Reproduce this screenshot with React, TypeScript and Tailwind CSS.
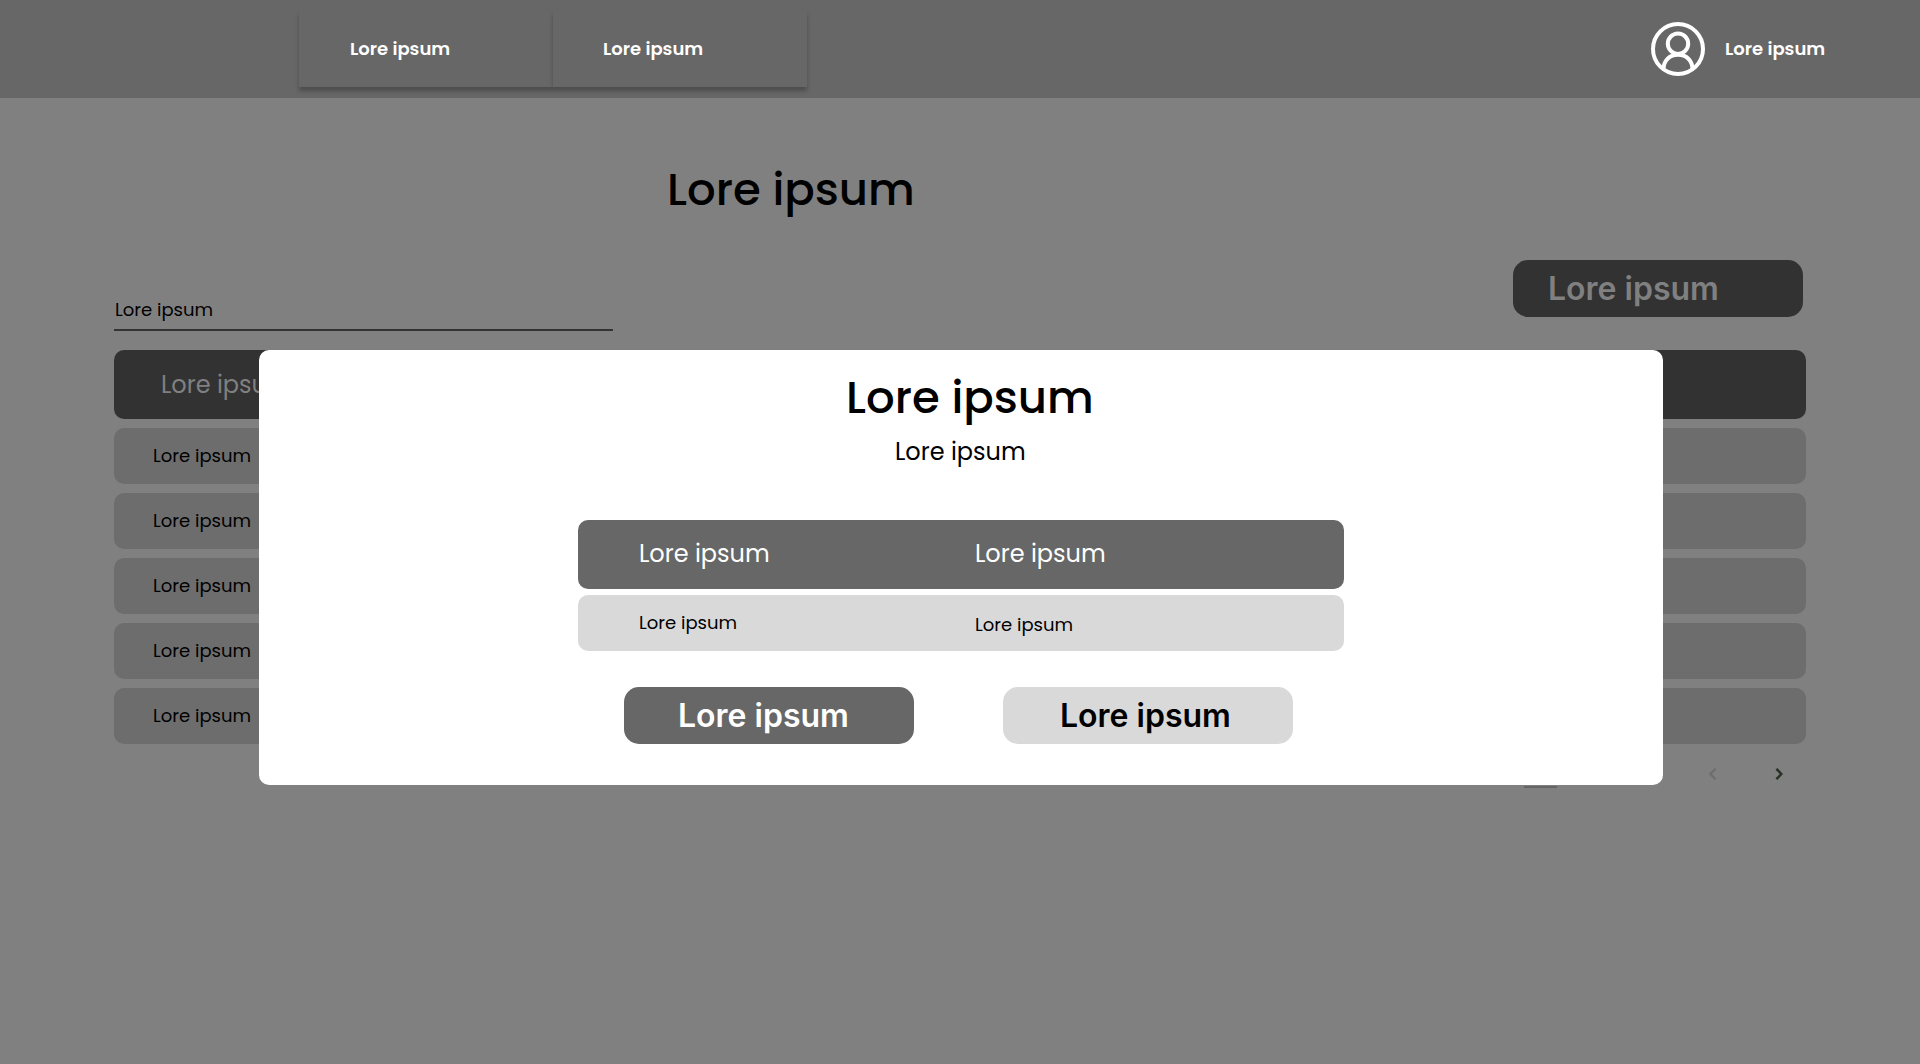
import type { ReactNode } from "react";

const rows = ["Lore ipsum", "Lore ipsum", "Lore ipsum", "Lore ipsum", "Lore ipsum"];

function NavTab({ children, className }: { children: ReactNode; className: string }) {
  return (
    <a
      className={`flex h-full w-[254px] items-center bg-[#676767] pb-px text-lg/[19px] font-semibold text-white shadow-[0_4px_4px_rgba(0,0,0,0.25)] ${className}`}
    >
      {children}
    </a>
  );
}

function BigButton({ children, className }: { children: ReactNode; className: string }) {
  return (
    <button
      className={`h-[57px] w-[290px] rounded-[15px] pt-3 pb-3 text-left font-['Inter',sans-serif] text-[32px]/[33px] font-semibold ${className}`}
    >
      {children}
    </button>
  );
}

function UserIcon() {
  return (
    <svg width="54" height="54" viewBox="0 0 54 54" fill="none" stroke="#fff" strokeWidth="4">
      <circle cx="27" cy="27" r="25" />
      <circle cx="27" cy="21.7" r="10.2" />
      <path d="M12.6 46.5C12.8 38 19 32.8 27 32.8S41.2 38 41.4 46.5" />
    </svg>
  );
}

function Header() {
  return (
    <header className="flex h-[98px] items-start bg-[#676767]">
      <nav className="mt-[11px] ml-[299px] flex h-[76px]">
        <NavTab className="pl-[51px]">Lore ipsum</NavTab>
        <NavTab className="pl-[50px]">Lore ipsum</NavTab>
      </nav>
      <div className="mt-[22px] ml-[844px] flex items-center">
        <UserIcon />
        <span className="mb-px ml-5 text-lg/[19px] font-semibold text-white">Lore ipsum</span>
      </div>
    </header>
  );
}

function Dialog() {
  return (
    <section
      role="dialog"
      className="absolute top-[350px] left-[259px] h-[435px] w-[1404px] rounded-[10px] bg-white pt-[25px]"
    >
      <h2 className="ml-[587px] text-[45px]/[45px] font-medium">Lore ipsum</h2>
      <p className="mt-[19px] ml-[636px] text-2xl/[25px]">Lore ipsum</p>
      <div className="mt-14 ml-[319px] w-[766px]">
        <div className="flex h-[69px] rounded-[10px] bg-[#676767] pt-[21px] pl-[61px] text-2xl/[25px] text-white">
          <span className="w-[336px]">Lore ipsum</span>
          <span>Lore ipsum</span>
        </div>
        <div className="mt-1.5 flex h-14 rounded-[10px] bg-[#d9d9d9] pt-[18px] pl-[61px] text-lg/[19px]">
          <span className="w-[336px]">Lore ipsum</span>
          <span className="pt-0.5">Lore ipsum</span>
        </div>
      </div>
      <div className="mt-9 ml-[365px] flex gap-[89px]">
        <BigButton className="bg-[#676767] pl-[54px] text-white">Lore ipsum</BigButton>
        <BigButton className="bg-[#d9d9d9] pl-[57px] text-black">Lore ipsum</BigButton>
      </div>
    </section>
  );
}

export default function App() {
  return (
    <div className="relative h-[1064px] w-[1920px] overflow-hidden bg-[#808080] font-['Poppins','Inter',sans-serif] text-black">
      <Header />
      <main>
        <h1 className="mt-[69px] ml-[667px] text-[45px]/[45px] font-medium">Lore ipsum</h1>
        <div className="mt-12 mr-[117px] ml-[114px] flex h-[71px] items-start justify-between">
          <div className="mt-10 h-[31px] w-[499px] border-b-2 border-[#333333] pl-px text-lg/[19px]">Lore ipsum</div>
          <BigButton className="bg-[#323232] pl-[35px] text-[#808080]">Lore ipsum</BigButton>
        </div>
        <div className="mt-[19px] ml-[114px] flex w-[1692px] flex-col gap-[9px]">
          <div className="h-[69px] rounded-[10px] bg-[#323232] pt-[22px] pl-[47px] text-2xl/[25px] text-[#808080]">
            Lore ipsum
          </div>
          {rows.map((label, i) => (
            <div key={i} className="h-14 rounded-[10px] bg-[#6d6d6d] pt-[18px] pl-[39px] text-lg/[19px]">
              {label}
            </div>
          ))}
        </div>
        <div className="mt-6 ml-[1524px] flex items-start">
          <div className="h-[20px] w-[33px] border-b-2 border-[#656565]" />
          <svg className="ml-[152px]" width="8" height="12" viewBox="0 0 8 12" fill="none" stroke="#6d6d6d" strokeWidth="2.2">
            <path d="M6.6 0.8L1.4 6L6.6 11.2" />
          </svg>
          <svg className="ml-[58px]" width="8" height="12" viewBox="0 0 8 12" fill="none" stroke="#263024" strokeWidth="2.4">
            <path d="M1.4 0.8L6.4 6L1.4 11.2" />
          </svg>
        </div>
      </main>
      <Dialog />
    </div>
  );
}
